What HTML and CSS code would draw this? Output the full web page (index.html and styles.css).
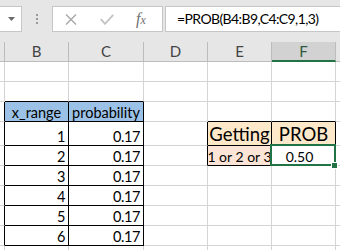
FILE: index.html
```html
<!DOCTYPE html>
<html lang="en">
<head>
<meta charset="UTF-8">
<title>PROB function</title>
<link rel="stylesheet" href="styles.css">
</head>
<body>

<div class="ribbon">
  <div class="namebox">
    <svg class="arrow" width="7" height="4" viewBox="0 0 7 4"><path d="M0 0h7L3.5 4z" fill="#6a6a6a"/></svg>
  </div>
  <div class="grip"><i></i><i></i><i></i></div>
  <div class="fxbox">
    <svg class="cancel" width="12" height="11" viewBox="0 0 12 11"><path d="M1 0.5l10 10M11 0.5l-10 10" stroke="#a8a8a8" stroke-width="1.4" fill="none"/></svg>
    <svg class="enter" width="14" height="11" viewBox="0 0 14 11"><path d="M0.8 5.2l4.2 4.6l8.2-9" stroke="#c2c2c2" stroke-width="1.8" fill="none"/></svg>
    <span class="fx">f<span>x</span></span>
  </div>
  <div class="formula">=PROB(B4:B9,C4:C9,1,3)</div>
</div>

<table class="sheet">
  <colgroup>
    <col class="col-a"><col class="col-b"><col class="col-c"><col class="col-d"><col class="col-e"><col class="col-f"><col class="col-g">
  </colgroup>
  <tr class="heads">
    <th></th><th>B</th><th>C</th><th>D</th><th>E</th><th class="on">F</th><th></th>
  </tr>
  <tr><td></td><td></td><td></td><td></td><td></td><td></td><td></td></tr>
  <tr><td></td><td class="bb"></td><td class="bb"></td><td></td><td></td><td></td><td></td></tr>
  <tr>
    <td class="br"></td>
    <td class="br bb head-blue">x_range</td>
    <td class="br bb head-blue">probability</td>
    <td></td><td class="bb"></td><td class="bb"></td><td></td>
  </tr>
  <tr class="tall">
    <td class="br"></td><td class="br bb num">1</td><td class="br bb num">0.17</td>
    <td class="br"></td>
    <td class="br bb cream big"><div>Getting</div></td>
    <td class="br bb cream big"><div>PROB</div></td>
    <td></td>
  </tr>
  <tr>
    <td class="br"></td><td class="br bb num">2</td><td class="br bb num">0.17</td>
    <td class="br"></td>
    <td class="br bb peach mid"><div>1 or 2 or 3</div></td>
    <td class="br bb mid active"><div>0.50</div></td>
    <td></td>
  </tr>
  <tr><td class="br"></td><td class="br bb num">3</td><td class="br bb num">0.17</td><td></td><td></td><td></td><td></td></tr>
  <tr><td class="br"></td><td class="br bb num">4</td><td class="br bb num">0.17</td><td></td><td></td><td></td><td></td></tr>
  <tr><td class="br"></td><td class="br bb num">5</td><td class="br bb num">0.17</td><td></td><td></td><td></td><td></td></tr>
  <tr><td class="br"></td><td class="br bb num">6</td><td class="br bb num">0.17</td><td></td><td></td><td></td><td></td></tr>
  <tr class="last"><td></td><td></td><td></td><td></td><td></td><td></td><td></td></tr>
</table>

</body>
</html>
```

FILE: styles.css
```css
* {
  box-sizing: border-box;
}

body {
  margin: 0;
  width: 340px;
  height: 250px;
  overflow: hidden;
  background: #fff;
  font-family: Lato, "Liberation Sans", sans-serif;
  color: #000;
}

/* formula bar */
.ribbon {
  height: 42px;
  background: #e6e6e6;
  display: flex;
  align-items: flex-start;
  padding-top: 6px;
}

.namebox {
  width: 32px;
  height: 26px;
  margin-left: -10px;
  background: #fff;
  border: 1px solid #c6c6c6;
  display: flex;
  align-items: center;
  justify-content: flex-end;
  padding-right: 6px;
}

.grip {
  margin: 8px 0 0 14px;
  display: flex;
  flex-direction: column;
  gap: 2px;
}

.grip i {
  display: block;
  width: 2px;
  height: 2px;
  background: #9a9a9a;
}

.fxbox {
  width: 111px;
  height: 26px;
  margin-left: 14px;
  background: #fff;
  border: 1px solid #c6c6c6;
  display: flex;
  align-items: center;
  padding-left: 12px;
}

.fxbox .enter {
  margin-left: 23px;
}

.fx {
  margin-left: 22px;
  font-family: "Liberation Serif", serif;
  font-style: italic;
  font-size: 16px;
  color: #6f6f6f;
}

.fx span {
  font-size: 12px;
}

.formula {
  flex: 1;
  height: 26px;
  margin: 0 -10px 0 2px;
  background: #fff;
  border: 1px solid #c6c6c6;
  padding-left: 11px;
  font-size: 14px;
  letter-spacing: -0.6px;
  line-height: 24px;
  white-space: nowrap;
}

/* grid */
.sheet {
  border-collapse: separate;
  border-spacing: 0;
  table-layout: fixed;
  width: 356px;
}

.col-a { width: 5px; }
.col-b { width: 64px; }
.col-c { width: 75px; }
.col-d { width: 64px; }
.col-e { width: 64px; }
.col-f { width: 64px; }
.col-g { width: 20px; }

.sheet td,
.sheet th {
  height: 20px;
  padding: 0;
  border-right: 1px solid #d4d4d4;
  border-bottom: 1px solid #d4d4d4;
  font-size: 14.5px;
  line-height: 17px;
  vertical-align: bottom;
  white-space: nowrap;
  overflow: hidden;
}

.heads th {
  background: #e6e6e6;
  border-right-color: #bcbcbc;
  border-bottom-color: #bcbcbc;
  font-weight: normal;
  font-size: 15px;
  color: #444;
  vertical-align: middle;
}

.heads th.on {
  background: #d2d2d2;
  border-bottom: 2px solid #217346;
  color: #2d5a3f;
}

.sheet tr.tall td {
  height: 24px;
}

.sheet tr.last td {
  height: 5px;
}

.sheet td.br { border-right-color: #000; }
.sheet td.bb { border-bottom-color: #000; }

.head-blue {
  background: #9bc2e6;
  text-align: center;
}

.num {
  text-align: right;
  padding-right: 3px !important;
  letter-spacing: -0.4px;
}

.cream { background: #fde9c9; }
.peach { background: #fce4d6; }

.big div,
.mid div {
  display: flex;
  justify-content: center;
}

.sheet td.big {
  font-size: 18.5px;
  line-height: 22px;
}

.sheet td.mid {
  font-size: 14px;
}

.sheet td.active {
  position: relative;
  overflow: visible;
  padding-right: 8px;
}

.active::before {
  content: "";
  position: absolute;
  left: -2px;
  top: -2px;
  right: -1px;
  bottom: -1px;
  border: 2px solid #217346;
}

.active::after {
  content: "";
  position: absolute;
  right: -2px;
  bottom: -3px;
  width: 5px;
  height: 5px;
  background: #217346;
  outline: 1px solid #fff;
}
```
